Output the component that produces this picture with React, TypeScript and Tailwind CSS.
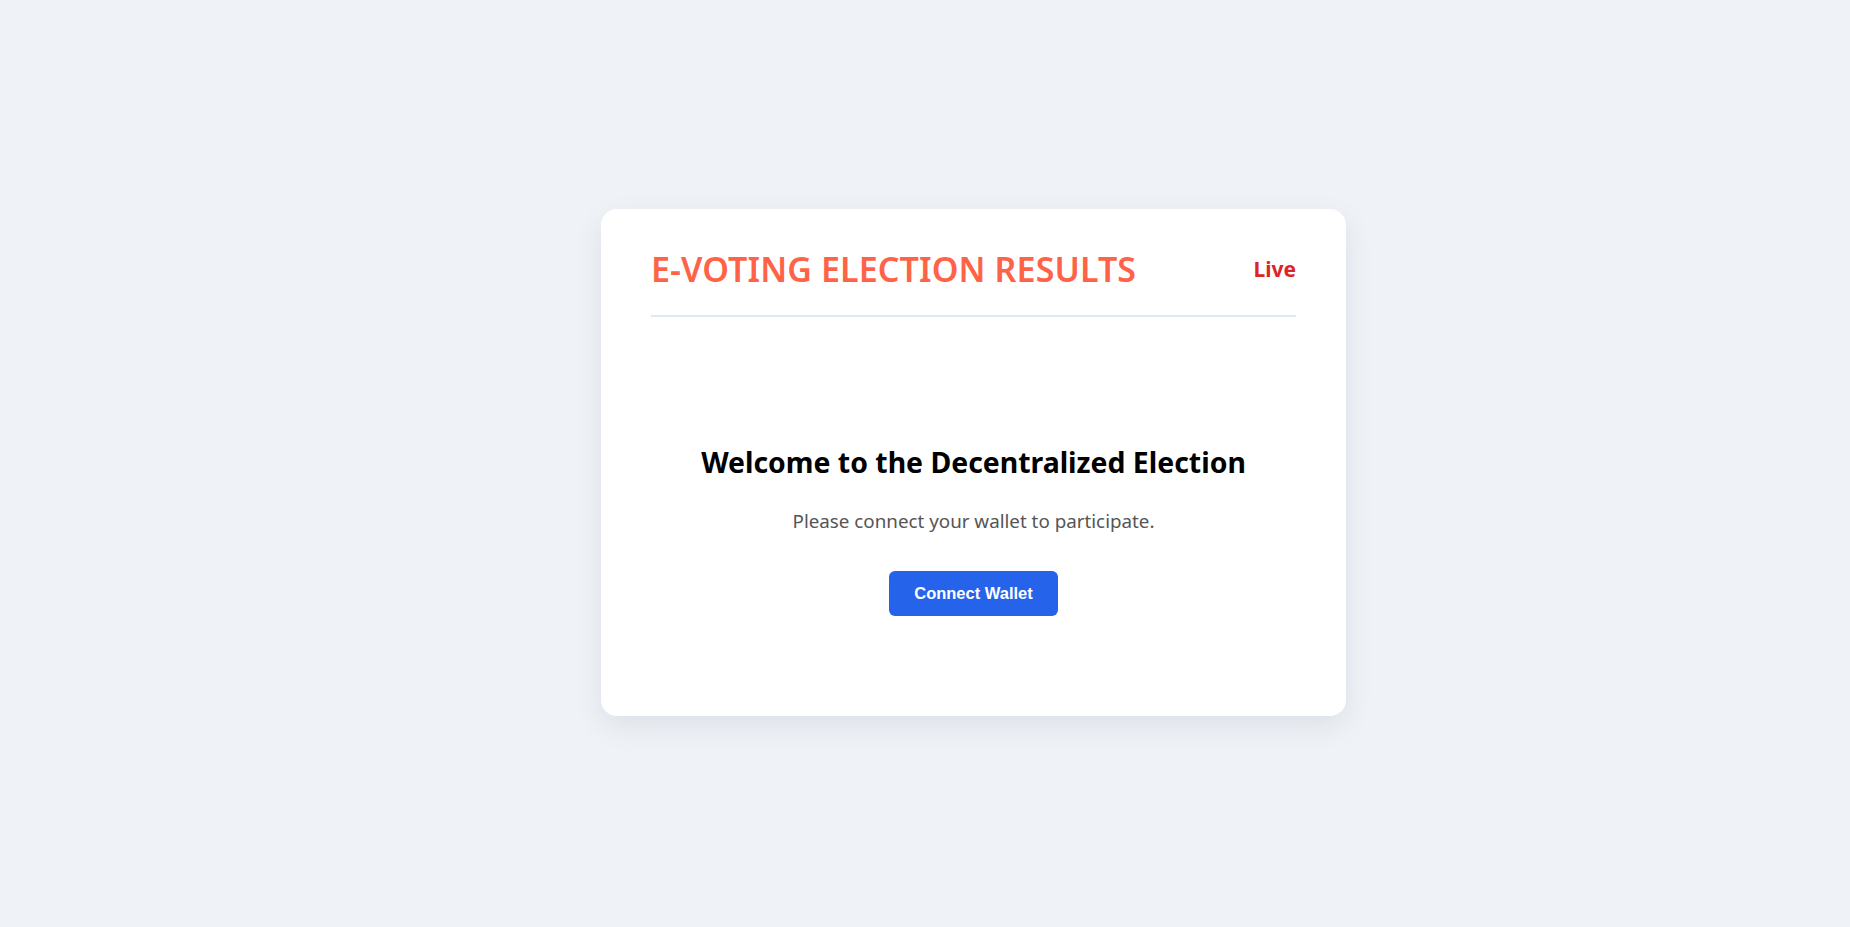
import React from "react";

const App = () => {
	return (
		<div className="min-h-screen w-full bg-[#eff2f7] flex items-center justify-center font-['Noto_Sans','Open_Sans',sans-serif]">
			<div className="ml-[97px] mb-[2px] w-[745px] bg-white rounded-2xl shadow-[0_10px_30px_rgba(15,23,42,0.08)] px-[50px] pt-[40px] pb-[52px]">
				<div className="flex items-center justify-between border-b-2 border-[#e2e8f0] pb-[26px]">
					<h1 className="text-[34px] leading-[40px] font-semibold text-[#ff6347] tracking-[0.1px]">
						E-VOTING ELECTION RESULTS
					</h1>
					<span className="text-[21px] leading-[30px] font-bold text-[#dc2626]">
						Live
					</span>
				</div>
				<div className="flex flex-col items-center pt-[127px] pb-[48px]">
					<h2 className="text-[28.4px] leading-[36px] font-bold text-black">
						Welcome to the Decentralized Election
					</h2>
					<p className="mt-[27px] text-[18.8px] leading-[28px] text-[#555555]">
						Please connect your wallet to participate.
					</p>
					<button
						type="button"
						className="mt-[36px] h-[45px] w-[169px] rounded-md bg-[#2563eb] text-white text-[16.5px] font-bold font-['Liberation_Sans',Arial,sans-serif]"
					>
						Connect Wallet
					</button>
				</div>
			</div>
		</div>
	);
};

export default App;
